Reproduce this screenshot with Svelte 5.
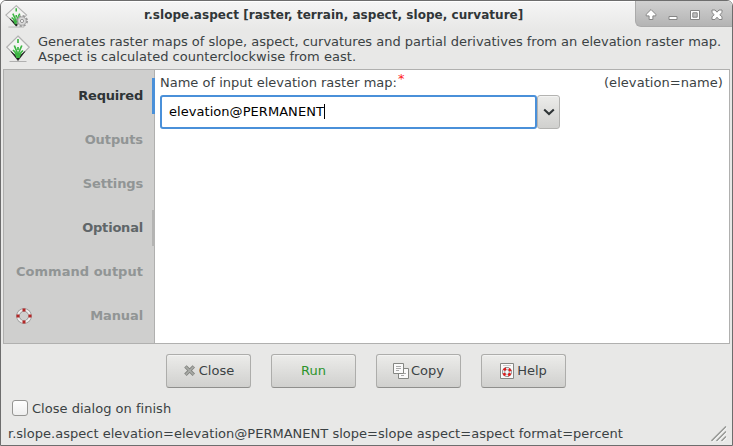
<script>
  const tabs = [
    { name: 'Required', state: 'active', track: -0.2 },
    { name: 'Outputs', state: '', track: -0.1 },
    { name: 'Settings', state: '', track: -0.15 },
    { name: 'Optional', state: 'hover', track: -0.2 },
    { name: 'Command output', state: '', track: 0.03 },
    { name: 'Manual', state: '', icon: true, track: -0.1 }
  ];
  let value = $state('elevation@PERMANENT');
</script>

{#snippet grass()}
  <path d="M12 1 23.3 12.2 12 23.5.7 12.2Z" fill="#f4f4f3" stroke="#b2b2b2" stroke-width="1.2" />
  <path d="M5 16.5 12 22.5 19 16.5 12 25.6Z" fill="#151515" stroke="#151515" stroke-width=".6" />
  <path d="M3.5 26.5H20.5" stroke="#b0b0b0" stroke-width="1" />
  <path d="M11.8 23 11 17 8.3 10.5M11.3 23 9 17 7 15M12.2 23 13 17 15.8 10.5M12.7 23 15 17.5 17 15.5M12 4V8M12 12V15" fill="none" stroke="#3cb643" stroke-width="1.7" />
{/snippet}

<div class="window">
  <header class="titlebar">
    <svg class="appicon" width="24" height="24" viewBox="0 0 24 24">
      <g transform="translate(.2 .8) scale(.92 .84)">{@render grass()}</g>
      <circle cx="17" cy="17" r="5" fill="none" stroke="#989898" stroke-width="2" stroke-dasharray="2.2 1.73" />
      <circle cx="17" cy="17" r="4.2" fill="#dadada" stroke="#a0a0a0" stroke-width=".9" />
      <circle cx="17" cy="17" r="1.6" fill="#f7f7f7" stroke="#8b8b8b" stroke-width=".9" />
    </svg>
    <h1>r.slope.aspect [raster, terrain, aspect, slope, curvature]</h1>
    <div class="controls">
      <svg width="97" height="26" viewBox="0 0 97 26" stroke-linejoin="round">
        <g fill="#fff" stroke="#858585" stroke-width="1">
          <path d="M15 9.5 19.8 14.3V15.9H16.9V19.5H13.1V15.9H10.2V14.3Z" />
          <path d="M33 16.5H41V19.5H33Z" />
          <path fill-rule="evenodd" d="M54.5 10.5H63.5V19.5H54.5ZM56.8 12.8V17.2H61.2V12.8Z" />
          <path d="M76 10H79L81 12.2 83 10H86V12.6L83.8 14.7 86 16.9V19.5H83L81 17.2 79 19.5H76V16.9L78.2 14.7 76 12.6Z" />
        </g>
      </svg>
    </div>
  </header>

  <section class="intro">
    <svg width="24" height="28" viewBox="0 0 24 28">{@render grass()}</svg>
    <p><span class="line">Generates raster maps of slope, aspect, curvatures and partial derivatives from an elevation raster map.</span><br /><span class="line2">Aspect is calculated counterclockwise from east.</span></p>
  </section>

  <main>
    <nav>
      {#each tabs as tab}
        <div class="tab {tab.state}">
          {#if tab.icon}
            <svg width="16" height="16" viewBox="0 0 16 16" fill="none">
              <circle cx="8" cy="8" r="6" stroke="#969696" stroke-width="3.6" />
              <circle cx="8" cy="8" r="6" stroke="#ededed" stroke-width="2.1" />
              <path d="M6.5 2h3M6.5 14h3M2 6.5v3M14 6.5v3" stroke="#b32626" stroke-width="3" />
            </svg>
          {/if}
          <span style="letter-spacing: {tab.track}px">{tab.name}</span>
        </div>
      {/each}
    </nav>
    <div class="content">
      <div class="labels">
        <span>Name of input elevation raster map:<b>*</b></span>
        <span class="param">(elevation=name)</span>
      </div>
      <div class="combo">
        <div class="entry"><span>{value}</span><i></i></div>
        <button class="drop" aria-label="Choose map">
          <svg width="12" height="8" viewBox="0 0 12 8"><path d="M1.2 1.5 6 6 10.8 1.5" fill="none" stroke="#2e3436" stroke-width="2.1" /></svg>
        </button>
      </div>
    </div>
  </main>

  <div class="actions">
    <button>
      <svg width="14" height="14" viewBox="0 0 14 14"><path d="M2.4 2.4 10.8 10.8M10.8 2.4 2.4 10.8" stroke="#80827e" stroke-width="3.4" /><path d="M2.6 2.6 10.6 10.6M10.6 2.6 2.6 10.6" stroke="#a9aba7" stroke-width="1.5" /></svg>
      <span>Close</span>
    </button>
    <button class="run">Run</button>
    <button>
      <svg width="16" height="16" viewBox="0 0 16 16">
        <path d="M5.5 5.5h10v10h-10z" fill="#fafafa" stroke="#858783" />
        <path d="M8 10.5h5M8 12.5h3" stroke="#aaa" />
        <path d="M.5.5h10v10H.5z" fill="#fafafa" stroke="#858783" />
        <path d="M3 3.5h5M3 5.5h5M3 7.5h3" stroke="#aaa" />
      </svg>
      <span>Copy</span>
    </button>
    <button class="help">
      <svg width="14" height="16" viewBox="0 0 14 16" fill="none">
        <path d="M.5.5h13v15H.5z" fill="#fafafa" stroke="#858783" />
        <path d="M3 2.5h8" stroke="#ccc" />
        <circle cx="7" cy="9" r="3.4" stroke="#777" stroke-width="3" />
        <circle cx="7" cy="9" r="3.4" stroke="#eee" stroke-width="1.8" />
        <circle cx="7" cy="9" r="3.5" stroke="#df1c1c" stroke-width="2.4" stroke-dasharray="2.75 2.75" stroke-dashoffset="-1.37" />
      </svg>
      <span>Help</span>
    </button>
  </div>

  <label class="finish"><span class="box"></span>Close dialog on finish</label>

  <footer>
    <span>r.slope.aspect elevation=elevation@PERMANENT slope=slope aspect=aspect format=percent</span>
    <svg width="16" height="16" viewBox="0 0 16 16" fill="none">
      <path d="M1 16 16 1M6 16 16 6M11 16 16 11" stroke="#fff" stroke-width="1.2" />
      <path d="M.5 15 15 .5M5.5 15 15 5.5M10.5 15 15 10.5" stroke="#999b98" stroke-width="1.6" />
    </svg>
  </footer>
</div>

<style>
  :global(body) { background: #fff; overflow: hidden; }
  * { box-sizing: border-box; }
  .window {
    width: 733px; height: 446px; display: flex; flex-direction: column;
    border: 1px solid #6d6d6d; border-radius: 6px 6px 0 0; background: #e8e8e7;
    font: 13px/15px "DejaVu Sans", sans-serif; color: #3b4244; overflow: hidden;
    white-space: nowrap;
  }
  svg { display: block; flex: none; }
  .titlebar {
    height: 28px; flex: none; display: flex; align-items: flex-start;
    background: linear-gradient(#f5f5f5, #e8e8e7); border-top: 1px solid #fff;
  }
  .appicon { margin: 2px 0 0 4px; }
  h1 { margin: 5px 0 0; flex: 1; padding-left: 115px; font-size: 12px; line-height: 16px; font-weight: 700; letter-spacing: .04px; color: #303638; }
  .controls {
    width: 97px; height: 26px; margin-top: -1px; border: solid #aaa; border-width: 0 0 1px 1px;
    border-radius: 0 0 0 6px; background: linear-gradient(#d0d0d0, #b4b4b4);
  }
  .controls svg { margin-top: -1px; }
  .intro { display: flex; height: 40px; flex: none; padding: 6px 0 0 5px; }
  .intro p { margin: -1px 0 0 8px; }
  .line { letter-spacing: -.01px; }
  .line2 { letter-spacing: .03px; }
  main { display: flex; flex: none; margin: 0 2px; height: 275px; border: 1px solid #b0b0af; background: #fff; }
  nav { width: 151px; background: #cfcfce; border-right: 1px solid #b0b0af; padding-top: 4px; }
  .tab {
    height: 44px; display: flex; align-items: center; justify-content: flex-end; position: relative;
    padding: 0 11px 0 12px; color: #919595; font-weight: 700;
  }
  .tab span { padding-bottom: 2px; }
  .tab svg { margin-right: auto; }
  .tab.active { color: #2e3436; }
  .tab.hover { color: #606668; }
  .tab.active::after, .tab.hover::after {
    content: ""; position: absolute; right: -1px; top: 4px; width: 3px; height: 36px; background: #4a90d9;
  }
  .tab.hover::after { background: #b4b4b3; }
  .content { flex: 1; padding: 5px 6px 0 5px; }
  .labels { display: flex; justify-content: space-between; height: 20px; }
  .labels b { color: #f22; font-weight: 400; position: relative; top: -4px; left: 1px; }
  .param { letter-spacing: .06px; }
  .combo { display: flex; height: 34px; }
  .entry {
    width: 377px; border: 2px solid #4a90d9; border-radius: 3px; display: flex; align-items: center;
    padding: 0 0 1px 7px; color: #000; letter-spacing: .05px;
  }
  .entry i { width: 1px; height: 15px; background: #000; }
  button {
    font: inherit; color: inherit; width: 85px; height: 34px; padding: 0 0 1px; border: 1px solid #adadab;
    border-bottom-color: #8f8f8d; border-radius: 3px; background: linear-gradient(#ececea, #d0d0ce);
    display: flex; align-items: center; justify-content: center; box-shadow: inset 0 1px #f3f3f2;
  }
  button.drop { width: 23px; border-color: #b3b3b1; }
  .actions { display: flex; gap: 20px; padding: 10px 0 0 165px; height: 44px; flex: none; }
  .actions svg { margin: 1px 2px 0 0; }
  .actions .help svg { margin-right: 3px; }
  .actions .run { color: #2b942b; }
  .finish { display: flex; height: 16px; margin: 12px 0 0 11px; align-items: center; gap: 4px; letter-spacing: .02px; }
  .box { width: 16px; height: 16px; border: 1px solid #959593; border-radius: 3px; background: linear-gradient(#fff, #eee); }
  footer { display: flex; justify-content: space-between; align-items: flex-start; padding: 10px 5px 0 7px; letter-spacing: .02px; }
</style>
